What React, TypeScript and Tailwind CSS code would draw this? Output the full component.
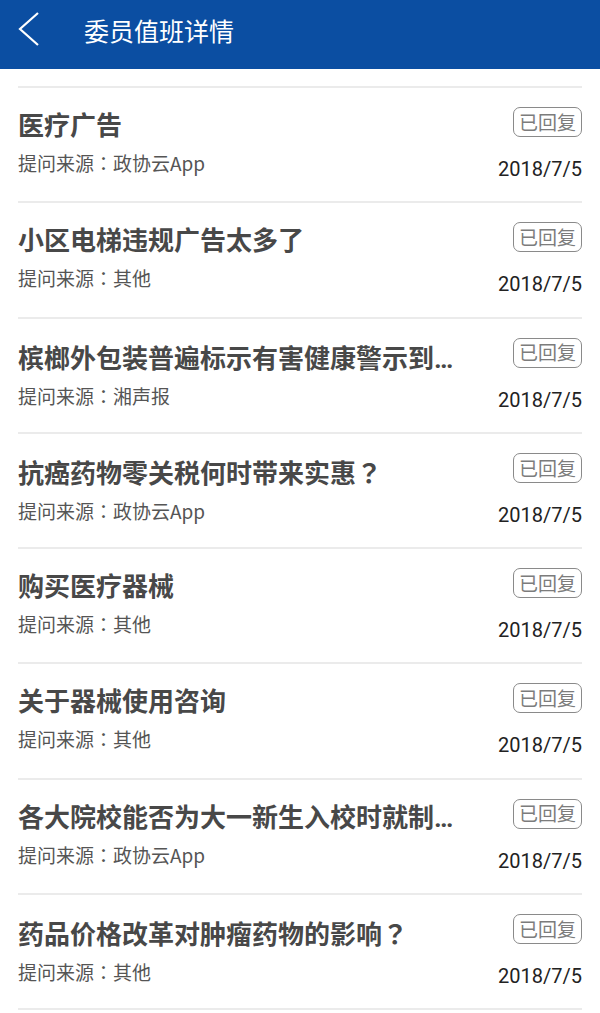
import React, { FC } from "react";

interface Item {
  title: string;
  source: string;
  date: string;
}

const ITEMS: Item[] = [
  { title: "医疗广告", source: "政协云App", date: "2018/7/5" },
  { title: "小区电梯违规广告太多了", source: "其他", date: "2018/7/5" },
  { title: "槟榔外包装普遍标示有害健康警示到位了吗？", source: "湘声报", date: "2018/7/5" },
  { title: "抗癌药物零关税何时带来实惠？", source: "政协云App", date: "2018/7/5" },
  { title: "购买医疗器械", source: "其他", date: "2018/7/5" },
  { title: "关于器械使用咨询", source: "其他", date: "2018/7/5" },
  { title: "各大院校能否为大一新生入校时就制定职业规划", source: "政协云App", date: "2018/7/5" },
  { title: "药品价格改革对肿瘤药物的影响？", source: "其他", date: "2018/7/5" },
];

const CJK = "font-['Noto_Sans_CJK_SC','Noto_Sans',sans-serif]";

// fullwidth punctuation sits centred in the reference, as in the TC cut
const Punct: FC<{ text: string }> = ({ text }) => {
  const parts = text.split(/([：？])/);
  return (
    <>
      {parts.map((p, i) =>
        p === "：" || p === "？" ? (
          <span key={i} className="font-['Noto_Sans_CJK_TC',sans-serif]">
            {p}
          </span>
        ) : (
          <React.Fragment key={i}>{p}</React.Fragment>
        )
      )}
    </>
  );
};

const Row: FC<{ item: Item }> = ({ item }) => {
  return (
    <div className="border-t-2 border-[#ebebeb] h-[115.25px] flex">
      <div className="flex-1 min-w-0 pt-[23px] pr-[30px]">
        <div className="font-['Roboto','Noto_Sans_CJK_SC',sans-serif] text-[26px] leading-[30px] font-bold text-[#484848] truncate">
          <Punct text={item.title} />
        </div>
        <div className={`${CJK} mt-[10px] text-[19px] leading-[24px] text-[#555]`}>
          <Punct text={"提问来源：" + item.source} />
        </div>
      </div>
      <div className="flex flex-col items-end pt-[19px]">
        <div
          className={`${CJK} h-[30px] w-[69px] rounded-[7px] border-[1.5px] border-[#8a8a8a] text-[#7c7c7c] text-[19px] flex items-center justify-center`}
        >
          已回复
        </div>
        <div className="mt-[20px] font-['Roboto',sans-serif] text-[20px] leading-[24px] text-[#222]">
          {item.date}
        </div>
      </div>
    </div>
  );
};

const App: FC = () => {
  return (
    <div className="w-[600px] h-[1013px] bg-white overflow-hidden">
      <div className="h-[69px] bg-[#0b4ea2] flex items-center">
        <svg width="60" height="69" viewBox="0 0 60 69" className="shrink-0">
          <path d="M38 13 L20 29 L38 45" fill="none" stroke="#fff" strokeWidth="2.2" strokeLinejoin="miter" />
        </svg>
        <div className={`${CJK} ml-[24px] -mt-[10px] text-white text-[25px] leading-[30px]`}>委员值班详情</div>
      </div>
      <div className="px-[18px] pt-[17px]">
        {ITEMS.map((item, i) => (
          <Row key={i} item={item} />
        ))}
        <div className="border-t-2 border-[#ebebeb]" />
      </div>
    </div>
  );
};

export default App;
